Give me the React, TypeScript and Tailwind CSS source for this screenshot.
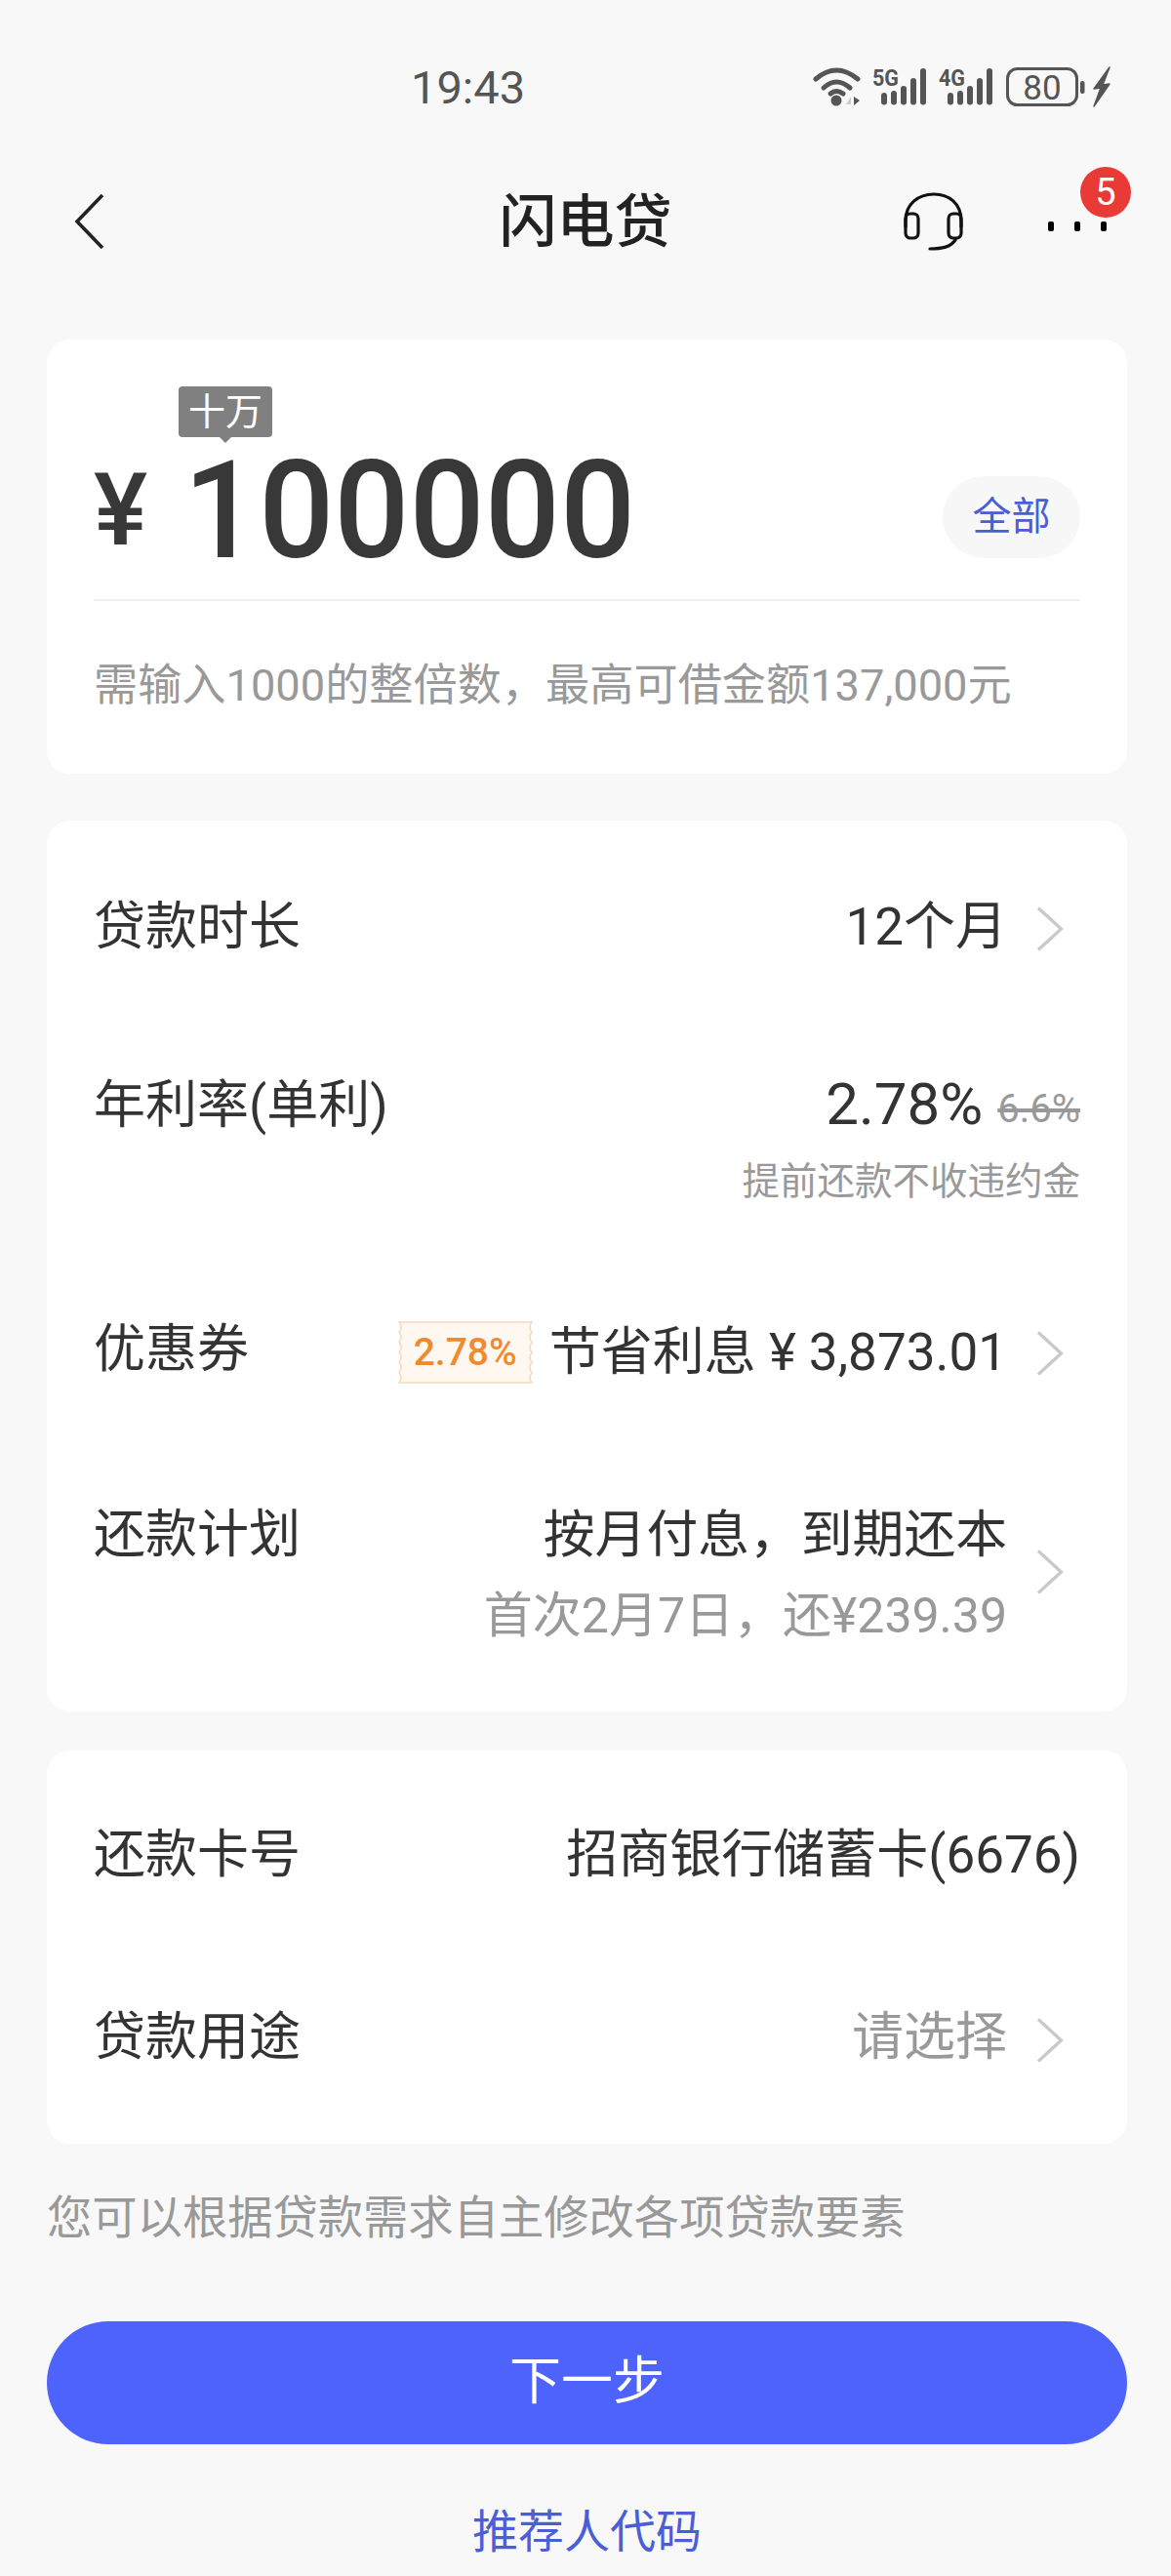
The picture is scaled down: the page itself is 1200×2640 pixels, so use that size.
import { ReactNode } from 'react';

function Chevron({ className = '' }: { className?: string }) {
  return (
    <svg className={`shrink-0 ${className}`} width="28" height="46" viewBox="0 0 28 46" fill="none">
      <path d="M2 1.5 L25.5 23 L2 44.5" stroke="#c9c9c9" strokeWidth="3.2" />
    </svg>
  );
}

function StatusIcons() {
  const bars = [
    [903, 94],
    [913, 92],
    [923, 87],
    [933, 79],
    [943, 69],
  ];
  return (
    <svg width="305" height="48" viewBox="833 64 305 48" fill="none">
      {/* wifi */}
      <g stroke="#555" strokeWidth="5" strokeLinecap="round">
        <path d="M836 80 Q857 62 879 80" />
        <path d="M844 89 Q857 77 871 89" />
        <path d="M851 95 Q857 90 864 95" />
      </g>
      <circle cx="857" cy="102" r="5.5" fill="#555" />
      <path d="M872 98 V106 H867 Z" fill="#ccc" />
      <path d="M875 98 L881 102 L875 107 Z" fill="#555" />
      {/* 5G signal */}
      <text x="894" y="87" fontFamily="Roboto, sans-serif" fontWeight="700" fontSize="24" fill="#555" textLength="27" lengthAdjust="spacingAndGlyphs">
        5G
      </text>
      {bars.map(([x, y]) => (
        <rect key={x} x={x} y={y} width="6" height={106.5 - y} rx="3" fill="#555" />
      ))}
      {/* 4G signal */}
      <text x="962" y="87" fontFamily="Roboto, sans-serif" fontWeight="700" fontSize="24" fill="#555" textLength="27" lengthAdjust="spacingAndGlyphs">
        4G
      </text>
      {bars.map(([x, y]) => (
        <rect key={x} x={x + 68} y={y} width="6" height={106.5 - y} rx="3" fill="#555" />
      ))}
      {/* battery */}
      <rect x="1032.5" y="69.5" width="71" height="37" rx="10" stroke="#555" strokeWidth="3" />
      <text x="1068" y="101" textAnchor="middle" fontFamily="Roboto, sans-serif" fontSize="35" fill="#555">
        80
      </text>
      <rect x="1107" y="82" width="4.5" height="13" rx="2" fill="#555" />
      <path d="M1137 68 L1121 90 L1128 89 L1121 108 L1137 85 L1130 86 Z" fill="#555" stroke="#555" strokeWidth="1.5" strokeLinejoin="round" />
    </svg>
  );
}

function Headset() {
  return (
    <svg width="64" height="64" viewBox="925 195 64 64" fill="none" stroke="#111" strokeWidth="3.2" strokeLinecap="round">
      <path d="M928 232 V226 C928 209 941 199 957 199 C973 199 985 209 985 226 V232" />
      <rect x="928" y="219" width="13" height="25" rx="5" />
      <rect x="972" y="219" width="13" height="25" rx="5" />
      <path d="M979 246 C974 253 966 255 953 255" />
    </svg>
  );
}

// scalloped coupon outline
function Ticket() {
  const right = Array.from({ length: 6 }, () => 'q-4 5.17 0 10.33').join(' ');
  const left = Array.from({ length: 6 }, () => 'q4 -5.17 0 -10.33').join(' ');
  return (
    <div className="relative mt-[3px] flex h-[64px] w-[138px] items-center justify-center">
      <svg className="absolute inset-0" width="138" height="64" viewBox="0 0 138 64">
        <path d={`M1 1 H137 ${right} H1 ${left} Z`} fill="#fff8f1" stroke="#f8d9bd" strokeWidth="1.6" />
      </svg>
      <span className="relative text-[39px] leading-none font-medium text-[#ef8a2e]">2.78%</span>
    </div>
  );
}

function Row({ label, children, className = '' }: { label: string; children: ReactNode; className?: string }) {
  return (
    <div className={`flex items-start justify-between ${className}`}>
      <div className="text-[53px] leading-[64px] text-[#333]">{label}</div>
      {children}
    </div>
  );
}

export default function App() {
  return (
    <div className="h-[2640px] w-[1200px] overflow-hidden bg-[#f8f8f8] font-[family-name:Roboto,'Noto_Sans_CJK_SC',sans-serif]">
      {/* Status bar */}
      <div className="mt-[59px] flex h-[60px] items-center pl-[421px] pr-[62px]">
        <span className="text-[47px] leading-none text-[#555]">19:43</span>
        <div className="ml-auto">
          <StatusIcons />
        </div>
      </div>

      {/* Nav */}
      <div className="mt-[58px] flex h-[100px] items-center">
        <div className="w-[300px] pl-[76px]">
          <svg width="32" height="58" viewBox="0 0 32 58" fill="none">
            <path d="M29 2 L3 29 L29 56" stroke="#222" strokeWidth="3.6" />
          </svg>
        </div>
        <div className="flex-1 text-center text-[59px] leading-none font-medium text-[#222]">闪电贷</div>
        <div className="flex w-[300px] items-center justify-end pr-[66px]">
          <Headset />
          <div className="relative ml-[85px] flex h-[64px] w-[60px] items-center justify-between pt-[10px]">
            <span className="h-[10px] w-[6px] rounded-[2px] bg-black" />
            <span className="h-[10px] w-[6px] rounded-[2px] bg-black" />
            <span className="h-[10px] w-[6px] rounded-[2px] bg-black" />
            <span className="absolute left-[33px] top-[-24px] flex h-[52px] w-[52px] items-center justify-center rounded-full bg-[#ea3a35] text-[38px] leading-none text-white">
              5
            </span>
          </div>
        </div>
      </div>

      <div className="pl-[48px] pr-[45px]">
        {/* Amount card */}
        <div className="mt-[71px] rounded-[24px] bg-white px-[48px] pt-[92px] pb-[58px]">
          <div className="relative flex h-[176px] items-center border-b-2 border-[#eeeeee] pb-[16px]">
            <span className="absolute left-[87px] top-[-44px] flex h-[52px] w-[96px] items-center justify-center rounded-[4px] bg-[#808080] text-[38px] leading-none text-white">
              十万
              <span className="absolute bottom-[-6px] left-[41px] h-0 w-0 border-x-[7px] border-t-[7px] border-x-transparent border-t-[#808080]" />
            </span>
            <span className="w-[92px] pt-[8px] text-[104px] leading-none font-medium text-[#383838]">¥</span>
            <span className="origin-left scale-x-[0.97] pt-[7px] text-[140px] leading-[110px] font-medium text-[#383838]">100000</span>
            <span className="ml-auto mt-[22px] flex h-[84px] w-[141px] items-center justify-center rounded-full bg-[#f7f7f7] text-[40px] text-[#4a5fd5]">
              全部
            </span>
          </div>
          <div className="mt-[55px] text-[45.2px] leading-[64px] text-[#999]">需输入1000的整倍数，最高可借金额137,000元</div>
        </div>

        {/* Loan terms card */}
        <div className="mt-[48px] rounded-[24px] bg-white px-[48px] pt-[77px] pb-[66px]">
          <Row label="贷款时长">
            <div className="flex items-center">
              <span className="text-[53px] leading-[64px] text-[#333]">12个月</span>
              <Chevron className="ml-[30px] mr-[17px] mt-[3px]" />
            </div>
          </Row>

          <Row label="年利率(单利)" className="mt-[119px]">
            <div className="text-right">
              <div className="flex h-[64px] items-center justify-end">
                <span className="mb-[2px] text-[60px] leading-none text-[#333]">2.78%</span>
                <span className="ml-[15px] mt-[8px] text-[40px] leading-none text-[#999] line-through">6.6%</span>
              </div>
              <div className="mt-[23px] text-[38.5px] leading-[46px] text-[#999]">提前还款不收违约金</div>
            </div>
          </Row>

          <Row label="优惠券" className="mt-[117px]">
            <div className="flex items-center">
              <Ticket />
              <span className="ml-[17px] mt-[3px] text-[53px] leading-[64px] text-[#333]">节省利息 ¥ 3,873.01</span>
              <Chevron className="ml-[30px] mr-[17px] mt-[4px]" />
            </div>
          </Row>

          <Row label="还款计划" className="mt-[123px]">
            <div className="flex items-center">
              <div className="text-right">
                <div className="text-[52.8px] leading-[64px] text-[#333]">按月付息，到期还本</div>
                <div className="mt-[19px] text-[50px] leading-[64px] text-[#999]">首次2月7日，还¥239.39</div>
              </div>
              <Chevron className="ml-[30px] mr-[17px] mb-[8px]" />
            </div>
          </Row>
        </div>

        {/* Card + purpose card */}
        <div className="mt-[40px] rounded-[24px] bg-white px-[48px] pt-[75px] pb-[77px]">
          <Row label="还款卡号">
            <span className="text-[53px] leading-[64px] text-[#333]">招商银行储蓄卡(6676)</span>
          </Row>
          <Row label="贷款用途" className="mt-[123px]">
            <div className="flex items-center">
              <span className="text-[53px] leading-[64px] text-[#999]">请选择</span>
              <Chevron className="ml-[30px] mr-[17px] mt-[6px]" />
            </div>
          </Row>
        </div>

        <div className="mt-[44px] text-[46.3px] leading-[64px] text-[#999]">您可以根据贷款需求自主修改各项贷款要素</div>

        <div className="mt-[74px] flex h-[126px] items-center justify-center rounded-full bg-[#4d63fb] text-[53px] text-white">下一步</div>

        <div className="mt-[58px] text-center text-[47px] leading-[64px] text-[#4a5fd5]">推荐人代码</div>
      </div>
    </div>
  );
}
